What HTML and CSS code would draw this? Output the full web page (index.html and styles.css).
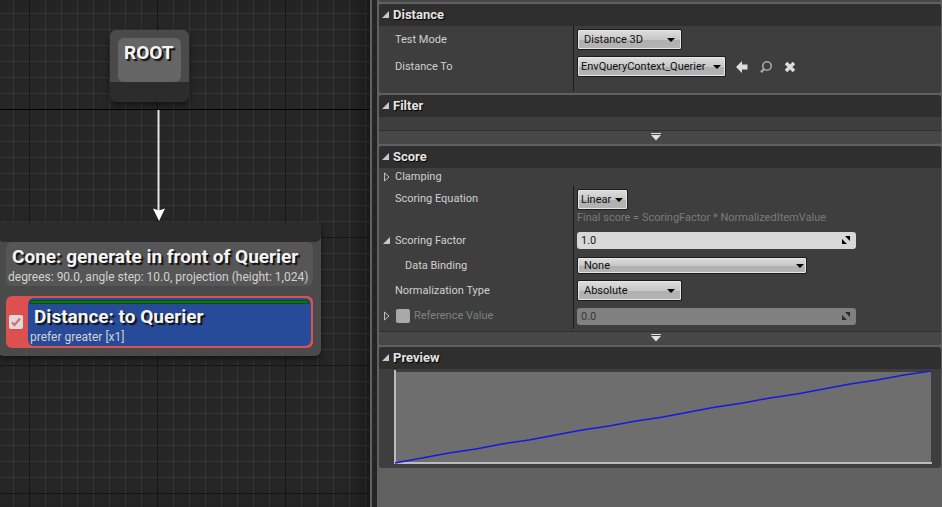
FILE: index.html
```
<!DOCTYPE html>
<html lang="en">
<head>
  <meta charset="UTF-8">
  <meta name="viewport" content="width=device-width, initial-scale=1.0">
  <title>EQS Editor</title>
  <link rel="stylesheet" href="styles.css">
</head>
<body>
  <main class="editor">
    <section class="graph" aria-label="Query graph">
      <div class="node root-node">
        <h2 class="node-title root-title">ROOT</h2>
      </div>

      <svg class="wire" width="14" height="112" viewBox="0 0 14 112">
        <path d="M6.5 0V102" stroke="#e8e8e8" stroke-width="2"/>
        <path d="M1 98.500L7 100.500L13 98.500L7 111Z" fill="#fff"/>
      </svg>

      <div class="node option-node">
        <div class="node-pin"></div>
        <div class="option-box">
          <h2 class="node-title">Cone: generate in front of Querier</h2>
          <p class="node-desc">degrees: 90.0, angle step: 10.0, projection (height: 1,024)</p>
        </div>
        <div class="test-box">
          <label class="test-toggle">
            <input type="checkbox" checked aria-label="Test enabled">
            <svg class="tick" width="14" height="14" viewBox="0 0 14 14">
              <path d="M3 7.500L5.500 10L11 3.500" fill="none" stroke="#e07070" stroke-width="2.400"/>
            </svg>
          </label>
          <div class="test-body">
            <div class="weight-bar"></div>
            <h2 class="node-title">Distance: to Querier</h2>
            <p class="node-desc">prefer greater [x1]</p>
          </div>
        </div>
      </div>
    </section>

    <div class="splitter"></div>

    <section class="details" aria-label="Details">
      <div class="category-end"></div>

      <div class="category">
        <button class="category-header"><svg class="open" width="8" height="8" viewBox="0 0 8 8"><path d="M7 0V7H0Z"/></svg>Distance</button>
        <div class="row">
          <label class="name" for="test-mode">Test Mode</label>
          <div class="value">
            <span class="combo wide"><select id="test-mode"><option>Distance 3D</option></select></span>
          </div>
        </div>
        <div class="row">
          <label class="name" for="distance-to">Distance To</label>
          <div class="value">
            <span class="combo context"><select id="distance-to"><option>EnvQueryContext_Querier</option></select></span>
            <button class="icon" aria-label="Use selected">
              <svg width="12" height="12" viewBox="0 0 12 12"><path d="M0 6L6 0V3.500H11.500V8.500H6V12Z" fill="#ddd"/></svg>
            </button>
            <button class="icon" aria-label="Browse">
              <svg width="12" height="12" viewBox="0 0 12 12"><circle cx="7" cy="5" r="4.200" fill="none" stroke="#aaa" stroke-width="1.600"/><path d="M4.200 7.800L1 11.200" stroke="#aaa" stroke-width="2.400"/></svg>
            </button>
            <button class="icon" aria-label="Clear">
              <svg width="12" height="12" viewBox="0 0 12 12"><path d="M2 2L10 10M10 2L2 10" stroke="#ddd" stroke-width="3.400"/></svg>
            </button>
          </div>
        </div>
        <div class="row spacer"><span></span><div class="value"></div></div>
      </div>

      <div class="category">
        <button class="category-header"><svg class="open" width="8" height="8" viewBox="0 0 8 8"><path d="M7 0V7H0Z"/></svg>Filter</button>
        <div class="empty"></div>
        <button class="advanced" aria-label="Show advanced">
          <svg width="10" height="8" viewBox="0 0 10 8"><path d="M0 0H10V1H0ZM0 2H10L5 7.500Z"/></svg>
        </button>
      </div>

      <div class="category score">
        <button class="category-header"><svg class="open" width="8" height="8" viewBox="0 0 8 8"><path d="M7 0V7H0Z"/></svg>Score</button>
        <div class="group-row">
          <button class="expander"><svg class="closed" width="6" height="10" viewBox="0 0 6 10"><path d="M0.500 1L5 5L0.500 9Z"/></svg>Clamping</button>
        </div>
        <div class="row equation">
          <label class="name" for="equation">Scoring Equation</label>
          <div class="value">
            <span class="combo small"><select id="equation"><option>Linear</option></select></span>
            <p class="hint">Final score = ScoringFactor * NormalizedItemValue</p>
          </div>
        </div>
        <div class="row">
          <label class="name" for="factor"><svg class="open" width="8" height="8" viewBox="0 0 8 8"><path d="M7 0V7H0Z"/></svg>Scoring Factor</label>
          <div class="value">
            <span class="spin">
              <input id="factor" type="text" value="1.0">
              <svg width="8" height="8" viewBox="0 0 8 8"><path d="M3 0H8V5ZM0 3V8H5Z"/></svg>
            </span>
          </div>
        </div>
        <div class="row">
          <label class="name child" for="binding">Data Binding</label>
          <div class="value">
            <span class="combo binding"><select id="binding"><option>None</option></select></span>
          </div>
        </div>
        <div class="row">
          <label class="name" for="normalization">Normalization Type</label>
          <div class="value">
            <span class="combo wide"><select id="normalization"><option>Absolute</option></select></span>
          </div>
        </div>
        <div class="row disabled">
          <label class="name"><svg class="closed" width="6" height="10" viewBox="0 0 6 10"><path d="M0.500 1L5 5L0.500 9Z"/></svg><input type="checkbox">Reference Value</label>
          <div class="value">
            <span class="spin">
              <input type="text" value="0.0" aria-label="Reference Value" disabled>
              <svg width="8" height="8" viewBox="0 0 8 8"><path d="M3 0H8V5ZM0 3V8H5Z"/></svg>
            </span>
          </div>
        </div>
        <button class="advanced" aria-label="Show advanced">
          <svg width="10" height="8" viewBox="0 0 10 8"><path d="M0 0H10V1H0ZM0 2H10L5 7.500Z"/></svg>
        </button>
      </div>

      <div class="category">
        <button class="category-header"><svg class="open" width="8" height="8" viewBox="0 0 8 8"><path d="M7 0V7H0Z"/></svg>Preview</button>
        <div class="preview">
          <svg class="chart" viewBox="0 0 538 94" preserveAspectRatio="none" role="img" aria-label="Score curve">
            <rect x="1" y="2" width="536" height="91" fill="#6e6e6e"/>
            <path d="M1 0V93H538" fill="none" stroke="#bcbcbc" stroke-width="2"/>
            <polyline points="1,93 55,83 82,79 108,74 135,70 188,60 215,56 242,51 269,47 322,37 349,33 376,28 403,24 456,14 483,10 510,5 537,1" fill="none" stroke="#1818e0" stroke-width="1.500"/>
          </svg>
        </div>
      </div>
    </section>
  </main>
</body>
</html>
```
FILE: styles.css
```
* {
  box-sizing: border-box;
}

body {
  margin: 0;
  background: #606060;
  color: #d0d0d0;
  font-family: Roboto, sans-serif;
  font-size: 12px;
  line-height: 16px;
}

h2, p {
  margin: 0;
}

button, input, select {
  font: inherit;
  color: inherit;
}

button {
  padding: 0;
  border: none;
  background: none;
  cursor: pointer;
}

svg {
  display: block;
  flex: none;
}

.editor {
  display: grid;
  grid-template-columns: 370fr 9px 563fr;
  min-height: 100vh;
}

/* graph */
.graph {
  position: relative;
  overflow: hidden;
  background-color: #262626;
  background-image:
    linear-gradient(#000, #000),
    linear-gradient(90deg, #161616 1px, transparent 1px),
    linear-gradient(#161616 1px, transparent 1px),
    linear-gradient(90deg, #353535 1px, transparent 1px),
    linear-gradient(#353535 1px, transparent 1px);
  background-size: 100% 1px, 128px 128px, 128px 128px, 16px 16px, 16px 16px;
  background-position: 0 109px, 29px 0, 0 109px, 13px 0, 0 13px;
  background-repeat: no-repeat, repeat, repeat, repeat, repeat;
}

.graph::after {
  content: "";
  position: absolute;
  inset: 0;
  box-shadow: inset -16px 0 24px -12px rgba(0, 0, 0, 0.5);
  pointer-events: none;
}

.node {
  position: absolute;
  border-radius: 6px;
  background: #4a4a4a;
  box-shadow: 0 3px 6px rgba(0, 0, 0, 0.5);
}

.node-title {
  padding: 0 6px;
  color: #f4f4f4;
  font-size: 19px;
  line-height: 22px;
  font-weight: bold;
  text-shadow: 2px 2px 1px #111;
  white-space: nowrap;
}

.node-desc {
  padding: 1px 2px 0;
  color: #d2d2d2;
  white-space: nowrap;
}

.root-node {
  left: 110px;
  top: 30px;
  padding: 8px 8px 0;
  border-bottom: 20px solid #2c2c2c;
}

.root-title {
  height: 44px;
  padding: 4px 7px 4px 6px;
  border-radius: 6px;
  background: #656565;
}

.wire {
  position: absolute;
  left: 152px;
  top: 110px;
}

.option-node {
  left: -2px;
  top: 222px;
  width: 323px;
  padding-bottom: 8px;
}

.node-pin {
  height: 20px;
  border-radius: 6px;
  background: #2c2c2c;
}

.option-box {
  margin: 0 8px 10px;
  padding: 4px 0 1px;
  border-radius: 6px;
  background: #565656;
}

.test-box {
  display: flex;
  margin: 0 8px;
  padding: 2px 2px 2px 0;
  border-radius: 6px;
  background: #dd5050;
}

.test-toggle {
  position: relative;
  display: flex;
  align-items: center;
  width: 22px;
  padding-left: 3px;
}

input[type="checkbox"] {
  appearance: none;
  width: 14px;
  height: 14px;
  margin: 0;
  border-radius: 2px;
  background: #dcdcdc;
}

.tick {
  position: absolute;
  left: 3px;
}

.test-body {
  flex: 1;
  padding: 2px 0 1px;
  border-radius: 6px;
  background: #274b98;
}

.weight-bar {
  height: 4px;
  margin: 0 2px 2px;
  border: 1px solid #0a4a20;
  background: #087808;
}

.splitter {
  border: solid #606060;
  border-width: 0 2px;
  background: #242424;
}

/* details */
.details {
  padding-right: 1px;
  font-size: 11px;
}

.category-end {
  height: 2px;
  margin-bottom: 2px;
  border-radius: 0 0 3px 3px;
  background: #474747;
}

.category {
  margin-bottom: 2px;
  border-radius: 3px;
  background: #3e3e3e;
  overflow: hidden;
}

.category-header {
  display: flex;
  align-items: center;
  gap: 3px;
  width: 100%;
  height: 22px;
  padding-left: 3px;
  background: #2f2f2f;
  color: #e4e4e4;
  font-size: 13px;
  font-weight: bold;
  text-shadow: 1px 1px 1px #000;
}

.open {
  fill: #c8c8c8;
}

.closed {
  fill: none;
  stroke: #c0c0c0;
}

.row {
  display: grid;
  grid-template-columns: 194px 1fr;
  min-height: 27px;
}

.score .row {
  min-height: 25px;
}

.name {
  display: flex;
  align-items: center;
  padding-left: 16px;
}

.name.child {
  padding-left: 26px;
}

.name svg {
  width: 8px;
  margin: 0 4px 0 -12px;
}

.name input {
  margin: 0 4px 0 1px;
}

.value {
  display: flex;
  align-items: center;
  border-left: 1px solid #1c1c1c;
  padding-left: 3px;
}

.row.spacer {
  min-height: 11px;
  margin-bottom: 2px;
}

.group-row {
  height: 18px;
}

.expander {
  display: flex;
  align-items: center;
  gap: 5px;
  height: 18px;
  padding-left: 5px;
}

.equation .name {
  height: 25px;
}

.equation .value {
  flex-direction: column;
  align-items: flex-start;
  padding-top: 3px;
  padding-bottom: 2px;
}

.hint {
  color: #7a7a7a;
}

.combo {
  position: relative;
  display: block;
}

.combo::after {
  content: "";
  position: absolute;
  right: 5px;
  top: calc(50% - 2px);
  border: solid transparent;
  border-width: 4px 4px 0;
  border-top-color: #000;
  pointer-events: none;
}

select {
  appearance: none;
  display: block;
  width: 100%;
  height: 21px;
  padding: 0 3px;
  border: 1px solid #1c1c1c;
  border-radius: 2px;
  background: linear-gradient(#dedede, #c8c8c8 50%, #b0b0b0 55%, #b4b4b4);
  box-shadow: inset 0 0 0 1px #e6e6e6;
  color: #101010;
}

.wide {
  width: 105px;
}

.wide::after {
  right: 7px;
}

.wide select,
.binding select {
  padding-left: 6px;
}

.context {
  width: 149px;
  margin-right: 10px;
}

.small {
  width: 51px;
}

.binding {
  width: 230px;
}

.binding::after {
  right: 3px;
}

.binding select {
  height: 17px;
}

.icon {
  margin-right: 12px;
}

.spin {
  position: relative;
  display: block;
  width: 279px;
}

.spin input {
  display: block;
  width: 100%;
  height: 17px;
  padding: 0 4px;
  border: none;
  border-radius: 3px;
  background: #d8d8d8;
  color: #202020;
}

.spin svg {
  position: absolute;
  right: 6px;
  top: 4px;
}

.disabled .name {
  color: #808080;
}

.disabled input[type="checkbox"] {
  background: #a8a8a8;
}

.disabled .spin input {
  background: #808080;
  color: #383838;
}

.disabled .spin svg {
  fill: #282828;
}

.score .disabled {
  min-height: 26px;
  margin-bottom: 2px;
}

.empty {
  height: 13px;
}

.advanced {
  display: flex;
  align-items: center;
  justify-content: center;
  width: 100%;
  height: 14px;
  padding: 0 8px 2px 0;
  border-top: 1px solid #303030;
  background: #474747;
  fill: #e0e0e0;
}

.preview {
  padding: 1px 9px 4px 15px;
}

.chart {
  width: 100%;
  height: 94px;
}
```
